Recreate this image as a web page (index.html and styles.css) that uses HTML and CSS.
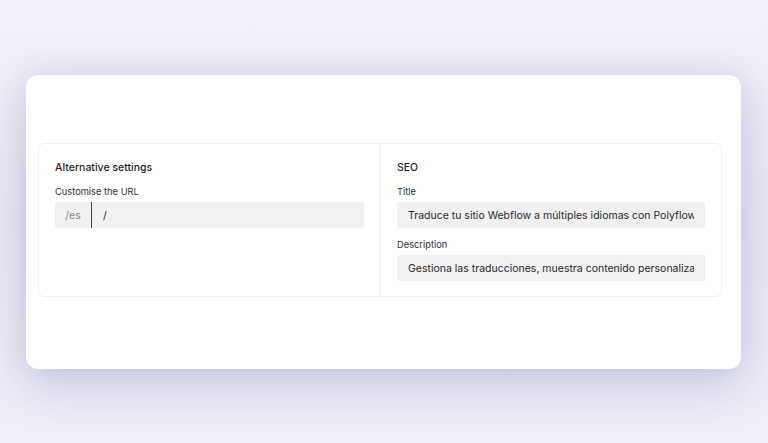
FILE: index.html
```html
<!DOCTYPE html>
<html lang="en">
<head>
<meta charset="utf-8">
<link rel="stylesheet" href="styles.css">
</head>
<body>
<div class="stage">
  <div class="card">
    <div class="panel">
      <section class="col">
        <h2 class="heading">Alternative settings</h2>
        <div class="field">
          <label class="label">Customise the URL</label>
          <div class="input url">
            <span class="prefix">/es</span>
            <span class="value">/</span>
          </div>
        </div>
      </section>
      <section class="col right">
        <h2 class="heading">SEO</h2>
        <div class="field">
          <label class="label">Title</label>
          <div class="input"><span class="value">Traduce tu sitio Webflow a múltiples idiomas con Polyflow</span></div>
        </div>
        <div class="field">
          <label class="label">Description</label>
          <div class="input"><span class="value">Gestiona las traducciones, muestra contenido personalizado a tus visitantes</span></div>
        </div>
      </section>
    </div>
  </div>
</div>
</body>
</html>
```
FILE: styles.css
```css
* { box-sizing: border-box; }
html, body { margin: 0; padding: 0; }
body {
  width: 768px;
  height: 443px;
  overflow: hidden;
  font-family: Inter, "Noto Sans", sans-serif;
  background: linear-gradient(180deg, #f1f1f9 0%, #e9e9f5 50%, #efeff9 100%);
  color: #222;
}
.stage {
  padding: 75px 27px 0 26px;
}
.card {
  height: 294px;
  background: #fff;
  border-radius: 12px;
  box-shadow: 0 18px 50px rgba(90, 90, 150, 0.22), 0 0 30px rgba(90, 90, 150, 0.10);
  padding: 68px 19px 0 12px;
}
.panel {
  display: grid;
  grid-template-columns: minmax(0, 1fr) minmax(0, 1fr);
  border: 1px solid #f0f0f0;
  border-radius: 6px;
  height: 154px;
}
.col {
  padding: 16px;
  min-width: 0;
}
.col.right {
  border-left: 1px solid #f0f0f0;
}
.heading {
  margin: 1px 0 0;
  font-size: 10.5px;
  font-weight: 500;
  line-height: 14px;
  color: #1f1f1f;
}
.field { margin-top: 11px; }
.field + .field { margin-top: 11px; }
.label {
  display: block;
  font-size: 9.3px;
  line-height: 11px;
  color: #333;
  margin-bottom: 5px;
}
.input {
  display: flex;
  align-items: center;
  height: 26px;
  background: #f1f1f1;
  border-radius: 3px;
  padding: 0 11px;
  overflow: hidden;
  font-size: 10.5px;
  color: #2a2a2a;
  white-space: nowrap;
}
.input.url { padding: 0; }
.prefix {
  width: 37px;
  height: 100%;
  flex: none;
  display: flex;
  align-items: center;
  justify-content: center;
  color: #888;
  border-right: 1px solid #444;
}
.url .value { padding-left: 11px; }
.value { overflow: hidden; }
```
